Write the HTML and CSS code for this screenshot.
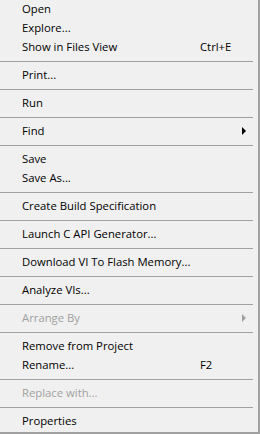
FILE: index.html
```html
<!DOCTYPE html>
<html lang="en">
<head>
    <meta charset="UTF-8">
    <title>Context Menu</title>
    <link rel="stylesheet" href="styles.css">
</head>
<body>
    <ul class="menu">
        <li class="item"><span class="label">Open</span></li>
        <li class="item"><span class="label">Explore...</span></li>
        <li class="item"><span class="label">Show in Files View</span><span class="key">Ctrl+E</span></li>
        <li class="sep"></li>
        <li class="item"><span class="label">Print...</span></li>
        <li class="sep"></li>
        <li class="item"><span class="label">Run</span></li>
        <li class="sep"></li>
        <li class="item"><span class="label">Find</span><span class="key"></span><span class="arrow"></span></li>
        <li class="sep"></li>
        <li class="item"><span class="label">Save</span></li>
        <li class="item"><span class="label">Save As...</span></li>
        <li class="sep"></li>
        <li class="item"><span class="label">Create Build Specification</span></li>
        <li class="sep"></li>
        <li class="item"><span class="label">Launch C API Generator...</span></li>
        <li class="sep"></li>
        <li class="item"><span class="label">Download VI To Flash Memory...</span></li>
        <li class="sep"></li>
        <li class="item"><span class="label">Analyze VIs...</span></li>
        <li class="sep"></li>
        <li class="item disabled"><span class="label">Arrange By</span><span class="key"></span><span class="arrow"></span></li>
        <li class="sep"></li>
        <li class="item"><span class="label">Remove from Project</span></li>
        <li class="item"><span class="label">Rename...</span><span class="key">F2</span></li>
        <li class="sep"></li>
        <li class="item disabled"><span class="label">Replace with...</span></li>
        <li class="sep"></li>
        <li class="item"><span class="label">Properties</span></li>
    </ul>
</body>
</html>
```

FILE: styles.css
```css
* {
    box-sizing: border-box;
    margin: 0;
    padding: 0;
}

body {
    background-color: #f0f0f0;
    font-family: "Open Sans", "Noto Sans", sans-serif;
    font-size: 11.3px;
    color: #000;
}

.menu {
    list-style: none;
    width: 260px;
    height: 434px;
    background-color: #f0f0f0;
    border-right: 2px solid #a0a0a0;
    border-bottom: 2px solid #a0a0a0;
}

.item {
    display: grid;
    grid-template-columns: 178px 1fr 12px;
    align-items: center;
    height: 19px;
    line-height: 18px;
    padding-left: 22px;
    padding-right: 6px;
    padding-bottom: 1px;
    white-space: nowrap;
}

.item.disabled {
    color: #a0a0a0;
}

.sep {
    height: 9px;
    padding-top: 4px;
    padding-right: 5px;
}

.sep::before {
    content: "";
    display: block;
    height: 1px;
    background-color: #a0a0a0;
}

.arrow {
    width: 0;
    height: 0;
    border-top: 4px solid transparent;
    border-bottom: 4px solid transparent;
    border-left: 4px solid #000;
    margin-left: 2px;
}

.disabled .arrow {
    border-left-color: #a0a0a0;
}
```
